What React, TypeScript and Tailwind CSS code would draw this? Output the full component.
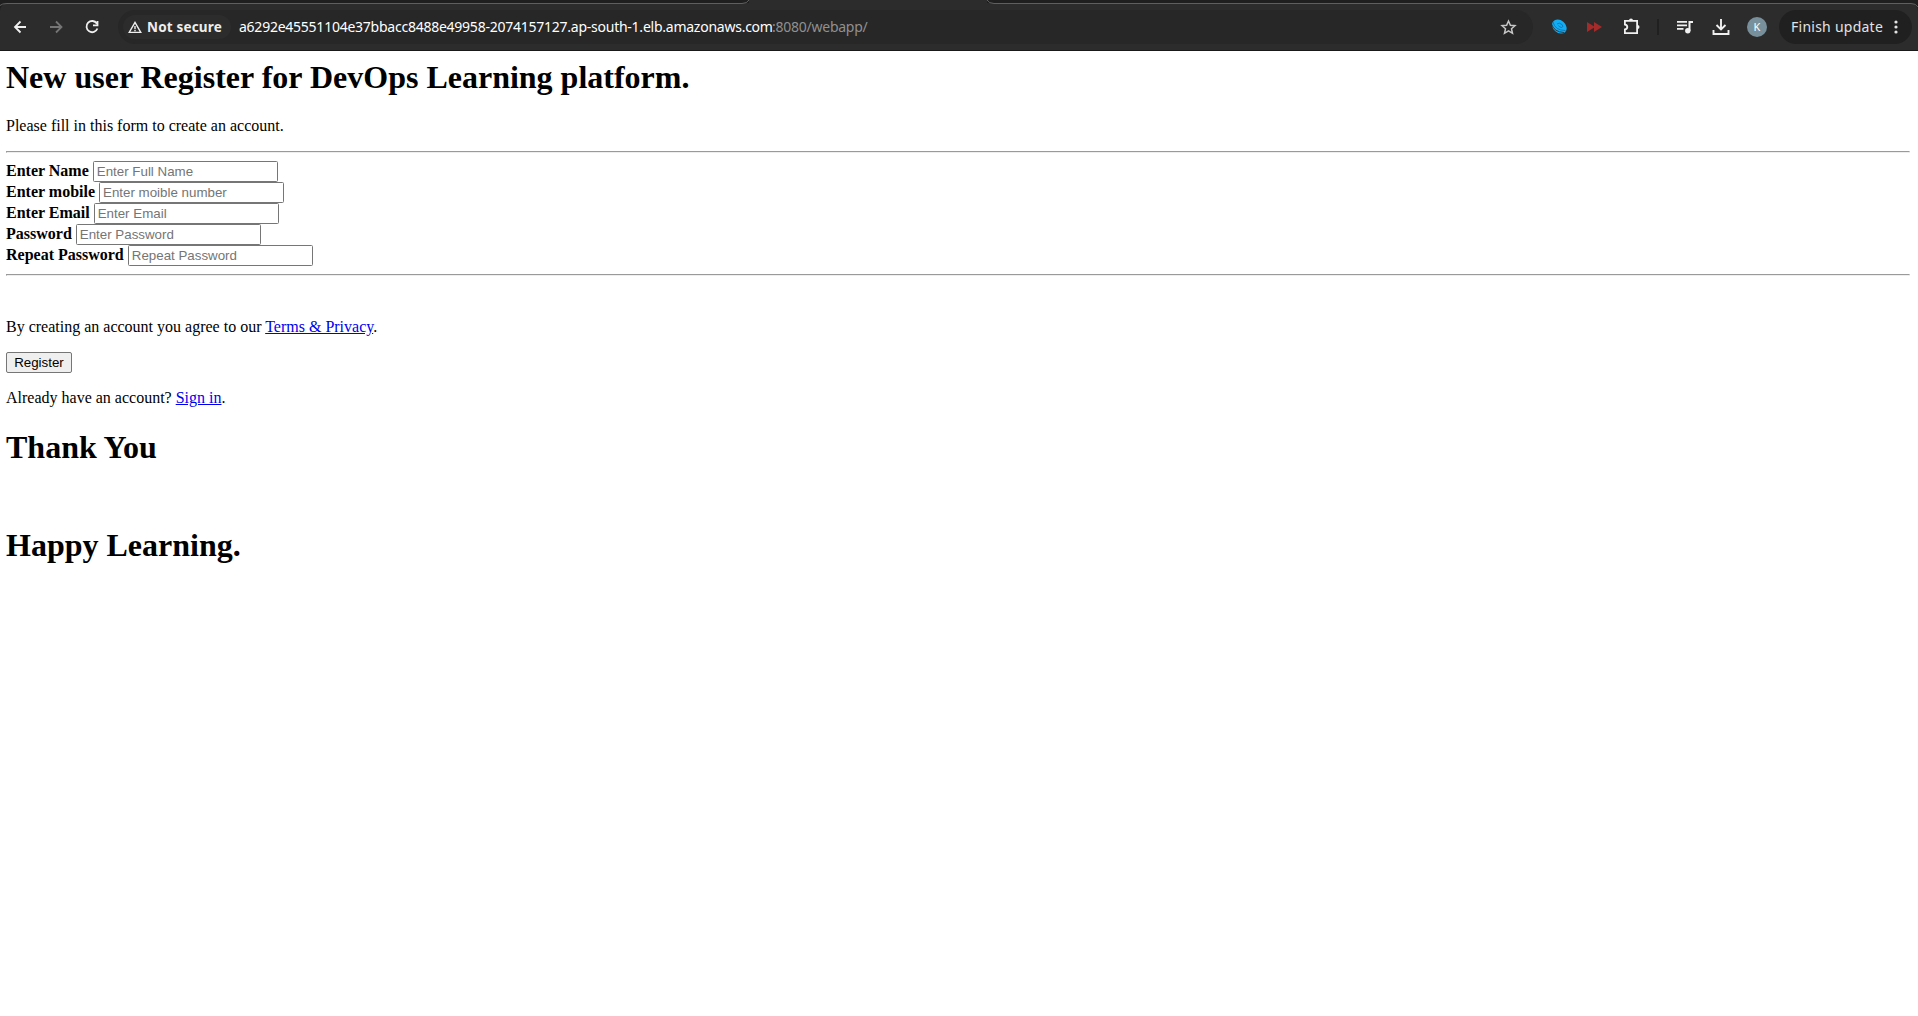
import type { ReactNode } from 'react';

function Field({ label, placeholder, type = 'text' }: { label: string; placeholder: string; type?: string }) {
  return (
    <div className="flex h-[21px] items-start gap-1">
      <label className="font-bold leading-[19px]">{label}</label>
      <input
        type={type}
        placeholder={placeholder}
        className="h-[21px] w-[185px] rounded-[1.500px] border border-[#767676] bg-white px-[3px] font-['Liberation_Sans',Arial,sans-serif] text-[13.333px] leading-[15px] placeholder:text-[#757575]"
      />
    </div>
  );
}

function Rule() {
  return <hr className="h-[2px] border border-t-[#9a9a9a] border-r-[#eeeeee] border-b-[#eeeeee] border-l-[#9a9a9a]" />;
}

function Link({ children }: { children: ReactNode }) {
  return <a href="#" className="text-[#0000ee] underline">{children}</a>;
}

function Toolbar() {
  return (
    <header className="h-[51px] w-full bg-[#1f1f1f] font-['Noto_Sans',sans-serif]">
      <div className="flex h-[3px] justify-between">
        <div className="w-[749px]" />
        <div className="w-[238px] bg-[#2c2c2c]" />
        <div className="w-[931px]" />
      </div>
      <div className="relative flex h-[48px] items-start rounded-t-[8px] border-b border-[#191919] bg-[#2c2c2c] pt-[7px]">
        <svg className="absolute left-0 top-[-3px]" width="1918" height="10" fill="none" stroke="#5f5f5f">
          <path d="M0 5.500Q2 3.500 7 3.500H742Q747 3.500 749 0M987 0Q989 3.500 994 3.500H1911Q1916 3.500 1918 7" />
        </svg>
        <svg className="mt-[6px] ml-[10px] text-[#f0f0f0]" width="20" height="22" viewBox="0 0 20 22" fill="none" stroke="currentColor" strokeWidth="1.800">
          <path d="M16 11H5M10.500 5.500L5 11L10.500 16.500" />
        </svg>
        <svg className="mt-[6px] ml-[16px] text-[#757575]" width="20" height="22" viewBox="0 0 20 22" fill="none" stroke="currentColor" strokeWidth="1.800">
          <path d="M4 11H15M10 5.500L15.500 11L10 16.500" />
        </svg>
        <svg className="mt-[6px] ml-[16px] text-[#f0f0f0]" width="20" height="22" viewBox="0 0 20 22" fill="none" stroke="currentColor" strokeWidth="1.800">
          <path d="M14.800 7.500A5.600 5.600 0 1 0 15.400 12.500M15.500 5V9.300H11" />
        </svg>
        <div className="ml-[16px] flex h-[34px] w-[1415px] shrink-0 items-center rounded-full bg-[#272727] pl-[5px]">
          <div className="flex h-[24px] w-[108px] items-center rounded-full bg-[#2c2c2c] pl-[5px] text-[#eeeeee]">
            <svg width="14" height="13" viewBox="0 0 15 14" fill="none" stroke="currentColor" strokeWidth="1.500">
              <path d="M1.300 12.250L7.500 1.500L13.700 12.250ZM7.500 5.500V8.500M7.500 9.500V11" />
            </svg>
            <span className="ml-[5px] w-[76px] whitespace-nowrap text-[13.500px] font-bold tracking-[0.170px]">Not secure</span>
          </div>
          <div className="ml-[8px] flex -translate-y-px whitespace-nowrap text-[14px]">
            <span className="w-[533px] tracking-[-0.245px] text-white">a6292e45551104e37bbacc8488e49958-2074157127.ap-south-1.elb.amazonaws.com</span>
            <span className="tracking-[-0.250px] text-[#909090]">:8080/webapp/</span>
          </div>
          <svg className="ml-auto mr-[16px]" width="17" height="17" viewBox="0 0 17 17" fill="none" stroke="#c7c7c7" strokeWidth="1.500">
            <path d="M8.500 2L10.400 6.300L15 6.700L11.500 9.800L12.500 14.300L8.500 11.900L4.500 14.300L5.500 9.800L2 6.700L6.600 6.300Z" />
          </svg>
        </div>
        <svg className="mt-[9px] ml-[18px]" width="16" height="16" viewBox="0 0 16 16">
          <ellipse cx="8" cy="7.500" rx="8" ry="6.200" transform="rotate(40 8 8)" fill="#12aef5" />
          <path d="M0.500 5Q3 13 13 13.500" fill="none" stroke="#2c2c2c" strokeWidth="0.900" />
          <path d="M2 3Q4 11.500 14.500 11.500M6 5Q8 3 11 5.500Q13 8 10.500 8.500Q8 8 7.500 6.500" fill="none" stroke="#176fa8" strokeWidth="0.900" />
        </svg>
        <svg className="mt-[12px] ml-[20px]" width="15" height="10" fill="#a52a2a"><path d="M0 0L8 5L0 10ZM7 0L15 5L7 10Z" /></svg>
        <svg className="mt-[7px] ml-[20px]" width="20" height="20" viewBox="0 0 20 20" fill="none" stroke="#f0f0f0" strokeWidth="1.800">
          <path d="M2.900 3.900H15.100V16.100H2.900V12.500Q5.300 12 5.300 10T2.900 7.500Z" />
          <path d="M7 3.500A2 2 0 0 1 11 3.500ZM15.500 8A2 2 0 0 1 15.500 12Z" fill="#f0f0f0" stroke="none" />
        </svg>
        <div className="mt-[9px] ml-[15px] h-[16px] w-[2px] bg-[#202020]" />
        <svg className="mt-[10px] ml-[18px]" width="17" height="15" viewBox="0 0 17 15" fill="#f0f0f0">
          <path d="M0 1H10V2.700H0ZM0 4.500H10V6.200H0ZM0 8H6.500V9.700H0ZM11.500 1H16V3H13.500V11H11.500Z" /><circle cx="10.800" cy="10.700" r="2.700" />
        </svg>
        <svg className="mt-[8px] ml-[18px]" width="18" height="18" viewBox="0 0 18 18" fill="none" stroke="#f0f0f0" strokeWidth="1.900">
          <path d="M9 1V11M4.500 7L9 11.500L13.500 7M1.500 12V16H16.500V12" />
        </svg>
        <div className="mt-[7px] ml-[17px] flex size-[20px] items-center justify-center rounded-full bg-[#78909c] text-[11px] text-white">K</div>
        <div className="ml-[12px] flex h-[34px] w-[133px] items-center rounded-full bg-[#202020] pl-[12px] text-[14px] text-[#e3e3e3]">
          <span className="w-[94px] -translate-y-px whitespace-nowrap tracking-[0.250px]">Finish update</span>
          <svg className="ml-[9px]" width="4" height="14" fill="currentColor"><circle cx="2" cy="2" r="1.600" /><circle cx="2" cy="7" r="1.600" /><circle cx="2" cy="12" r="1.600" /></svg>
        </div>
      </div>
    </header>
  );
}

export default function App() {
  return (
    <div className="h-[1016px] w-full overflow-hidden bg-white">
      <Toolbar />
      <main className="ml-[6px] w-[1904px] pt-2 font-['Liberation_Serif','Times_New_Roman',serif] text-[16px] leading-[18px] text-black">
        <h1 className="mb-[21px] text-[32px] font-bold leading-[37px]">New user Register for DevOps Learning platform.</h1>
        <p className="mb-4">Please fill in this form to create an account.</p>
        <Rule />
        <form className="py-2">
          <Field label="Enter Name" placeholder="Enter Full Name" />
          <Field label="Enter mobile" placeholder="Enter moible number" />
          <Field label="Enter Email" placeholder="Enter Email" />
          <Field label="Password" placeholder="Enter Password" type="password" />
          <Field label="Repeat Password" placeholder="Repeat Password" type="password" />
        </form>
        <Rule />
        <p className="mt-[42px] mb-4">By creating an account you agree to our <Link>Terms &amp; Privacy</Link>.</p>
        <button className="block h-[21px] w-[66px] rounded-[2px] border border-[#767676] bg-[#efefef] font-['Liberation_Sans',Arial,sans-serif] text-[13.333px] leading-[15px]">Register</button>
        <p className="mt-4">Already have an account? <Link>Sign in</Link>.</p>
        <h1 className="mt-[22px] text-[32px] font-bold leading-[37px]">Thank You</h1>
        <h1 className="mt-[61px] text-[32px] font-bold leading-[37px]">Happy Learning.</h1>
      </main>
    </div>
  );
}
